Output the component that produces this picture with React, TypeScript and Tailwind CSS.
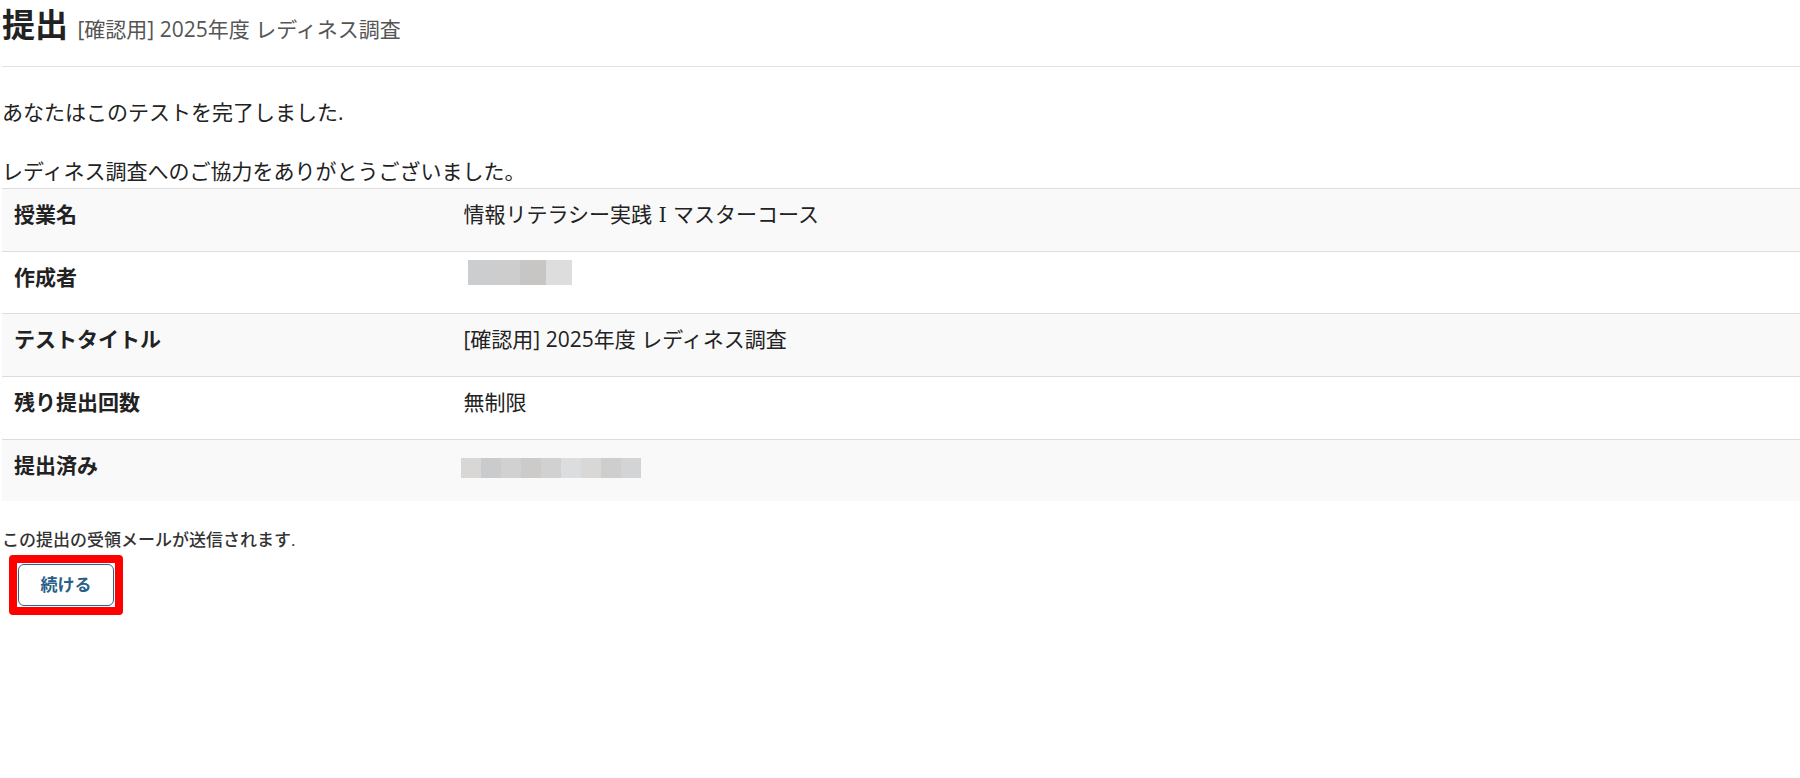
import React from 'react';

function Mosaic({ blocks, className }: { blocks: string[]; className: string }) {
  return (
    <div role="img" aria-label="非公開" className={className}>
      {blocks.map((color, i) => (
        <span key={i} className={`flex-1 ${color}`} />
      ))}
    </div>
  );
}

const authorBlocks = ['bg-[#cccdcf]', 'bg-[#cdcdcd]', 'bg-[#c7c6c4]', 'bg-[#dddddd]'];
const submittedBlocks = [
  'bg-[#d8d7d5]',
  'bg-[#c9cbcd]',
  'bg-[#d1d1d1]',
  'bg-[#cccbc9]',
  'bg-[#d1d1d1]',
  'bg-[#dbdddf]',
  'bg-[#d9d8d6]',
  'bg-[#cecece]',
  'bg-[#d3d4d6]',
];

const rows: { label: string; value: React.ReactNode }[] = [
  {
    label: '授業名',
    value: (
      <>
        情報リテラシー実践
        <span className="inline-block w-[21px] text-center font-['Liberation_Serif','DejaVu_Serif',serif] leading-none">Ⅰ</span>
        マスターコース
      </>
    ),
  },
  {
    label: '作成者',
    value: <Mosaic blocks={authorBlocks} className="ml-1 -mt-0.5 flex h-[25px] w-[104px]" />,
  },
  { label: 'テストタイトル', value: '[確認用] 2025年度 レディネス調査' },
  { label: '残り提出回数', value: '無制限' },
  {
    label: '提出済み',
    value: <Mosaic blocks={submittedBlocks} className="-ml-[3px] mt-2 flex h-5 w-[180px]" />,
  },
];

export default function App() {
  return (
    <main className="min-h-screen bg-white pl-0.5 font-['Open_Sans','Noto_Sans_CJK_JP',sans-serif] text-[21px] leading-[30px] text-[#222]">
      <header className="border-b border-[#e3e3e3] pb-3">
        <h1 className="text-[33px] leading-[50px] font-bold">
          提出<small className="ml-1 text-[21px] font-normal text-[#555]"> [確認用] 2025年度 レディネス調査</small>
        </h1>
      </header>

      <p className="mt-[30px]">あなたはこのテストを完了しました.</p>
      <p className="mt-[29px] mb-0.5">レディネス調査へのご協力をありがとうございました。</p>

      <table className="h-[313px] w-full table-fixed border-collapse">
        <tbody>
          {rows.map((row) => (
            <tr key={row.label} className="border-t border-[#ddd] align-top odd:bg-[#f9f9f9]">
              <th scope="row" className="w-1/4 px-3 pt-2.5 pb-0 text-left align-top font-bold">
                {row.label}
              </th>
              <td className="px-3 pt-2.5 pb-0 align-top">{row.value}</td>
            </tr>
          ))}
        </tbody>
      </table>

      <p className="mt-6 text-[17px] font-medium text-[#333]">この提出の受領メールが送信されます.</p>
      <div className="ml-[7px] inline-flex rounded-[4px] border-8 border-[#ff0000] p-px">
        <button
          type="button"
          className="h-[42px] w-24 rounded-md border border-[#2f6690] bg-white text-[17px] font-bold text-[#2a5f88]"
        >
          続ける
        </button>
      </div>
    </main>
  );
}
